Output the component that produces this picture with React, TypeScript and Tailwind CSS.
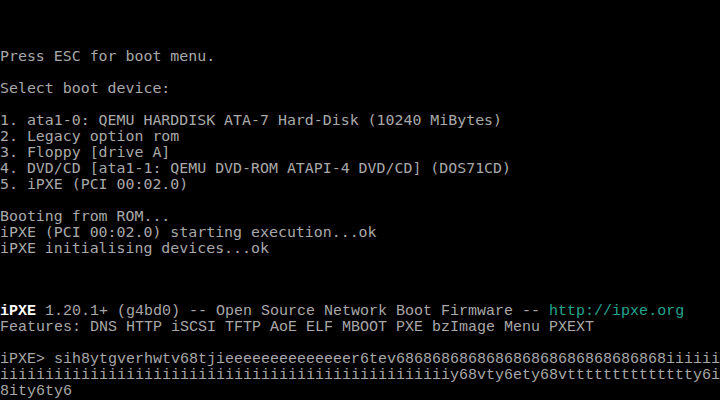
const biosLines: string[] = [
  "",
  "",
  "",
  "Press ESC for boot menu.",
  "",
  "Select boot device:",
  "",
  "1. ata1-0: QEMU HARDDISK ATA-7 Hard-Disk (10240 MiBytes)",
  "2. Legacy option rom",
  "3. Floppy [drive A]",
  "4. DVD/CD [ata1-1: QEMU DVD-ROM ATAPI-4 DVD/CD] (DOS71CD)",
  "5. iPXE (PCI 00:02.0)",
  "",
  "Booting from ROM...",
  "iPXE (PCI 00:02.0) starting execution...ok",
  "iPXE initialising devices...ok",
  "",
  "",
  "",
];

const typed =
  "sih8ytgverhwtv68tji" +
  "e".repeat(14) +
  "r6tev" +
  "68".repeat(15) +
  "i".repeat(6) +
  "i".repeat(50) +
  "y68vty6ety68v" +
  "t".repeat(14) +
  "y6i" +
  "8ity6ty6";

function chunk(s: string, n: number) {
  const out: string[] = [];
  for (let i = 0; i < s.length; i += n) out.push(s.slice(i, i + n));
  return out;
}

const prompt = "iPXE> " + typed;
const promptLines = chunk(prompt, 80);

export default function App() {
  return (
    <div className="w-[720px] h-[400px] bg-black overflow-hidden">
      <div className="font-['DejaVu_Sans_Mono',monospace] text-[14.9px] leading-4 text-[#a8a8a8]">
        {biosLines.map((line, i) => (
          <div key={i} className="h-4 whitespace-pre">
            {line}
          </div>
        ))}
      </div>
      <div className="font-['Liberation_Mono',monospace] text-[15px] leading-4 text-[#a8a8a8]">
        <div className="h-4 whitespace-pre">
          <span className="text-white font-bold">iPXE</span>
          {" 1.20.1+ (g4bd0) -- Open Source Network Boot Firmware -- "}
          <span className="text-[#22a58f]">http://ipxe.org</span>
        </div>
        <div className="h-4 whitespace-pre">
          Features: DNS HTTP iSCSI TFTP AoE ELF MBOOT PXE bzImage Menu PXEXT
        </div>
        <div className="h-4" />
        {promptLines.map((line, i) => (
          <div key={i} className="h-4 whitespace-pre">
            {line}
          </div>
        ))}
      </div>
    </div>
  );
}
